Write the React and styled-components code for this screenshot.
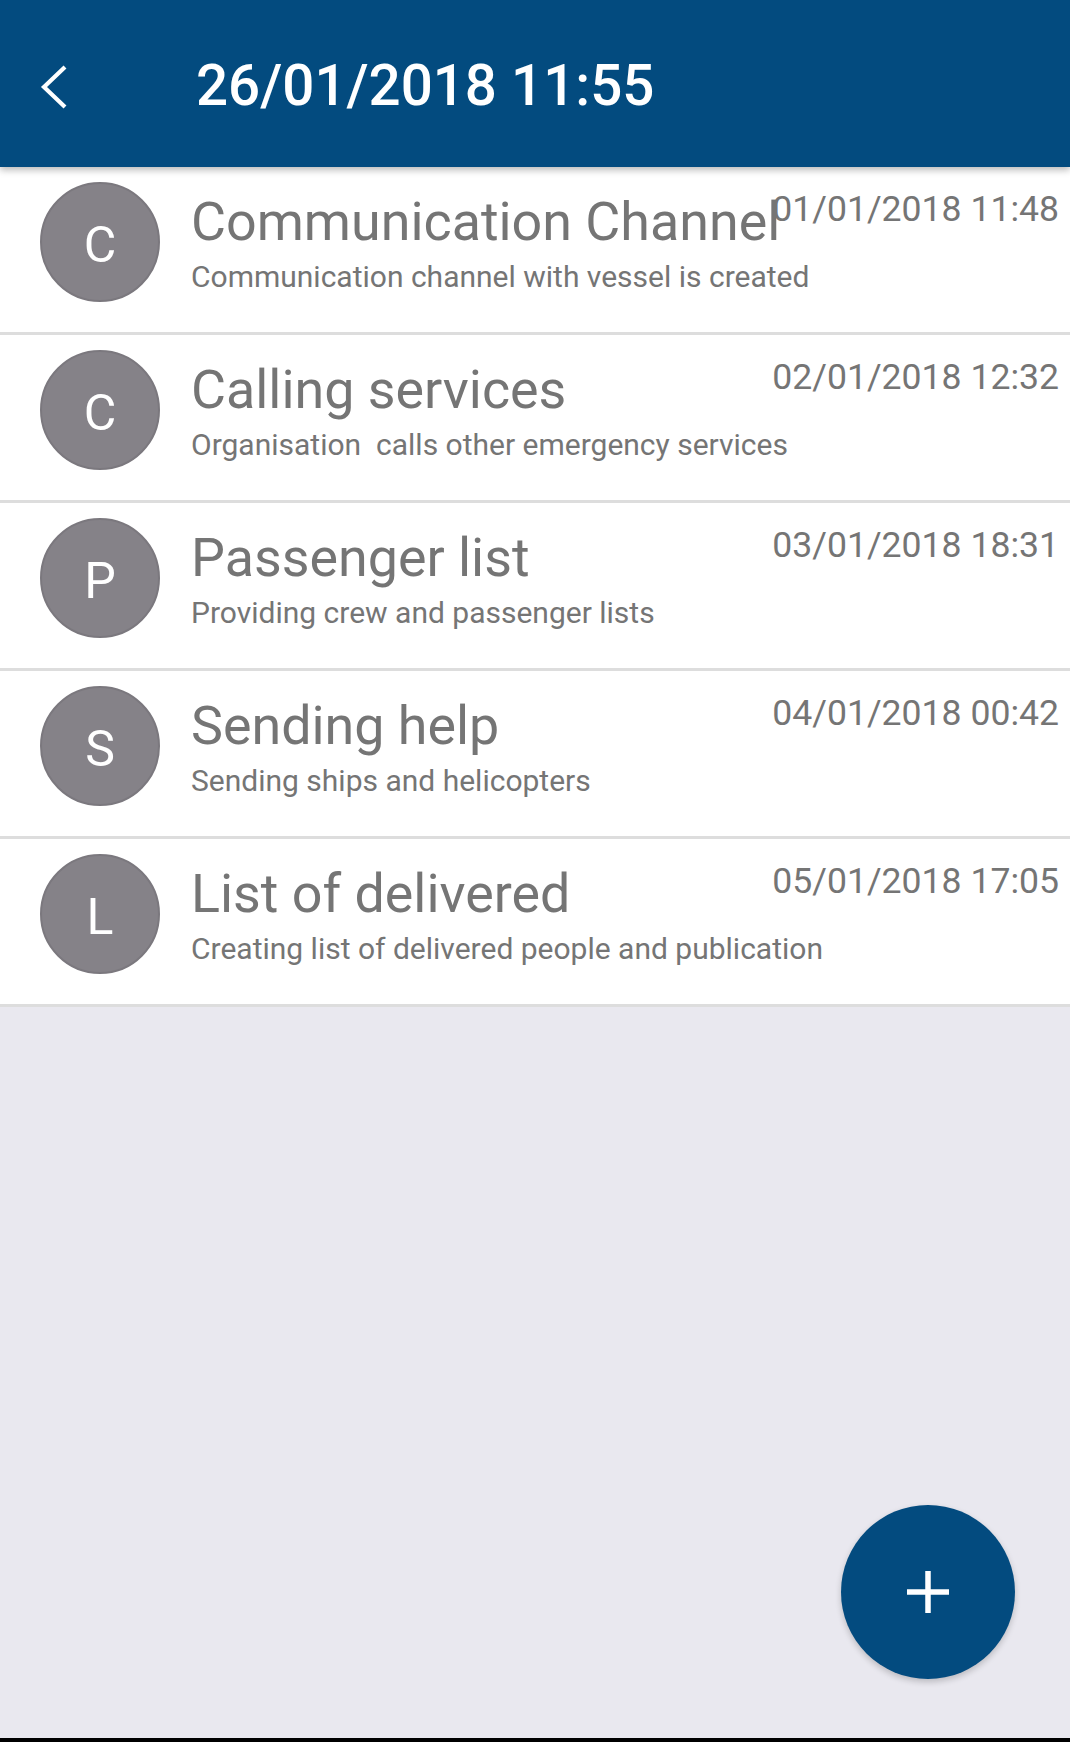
import styled, { createGlobalStyle } from "styled-components";

const GlobalStyle = createGlobalStyle`
  html, body {
    margin: 0;
    padding: 0;
    background: #e9e8ef;
  }
  * {
    box-sizing: border-box;
  }
`;

const Screen = styled.div`
  position: relative;
  min-height: 100vh;
  display: flex;
  flex-direction: column;
  background: #e9e8ef;
  border-bottom: 4px solid #000;
  font-family: Roboto, "Liberation Sans", sans-serif;
`;

const Header = styled.header`
  position: relative;
  z-index: 2;
  height: 167px;
  flex-shrink: 0;
  display: flex;
  align-items: center;
  padding: 6px 0 0 39px;
  background: #034b7f;
  box-shadow: 0 3px 7px rgba(0, 0, 0, 0.28);
`;

const BackButton = styled.button`
  display: flex;
  padding: 0;
  border: none;
  background: none;
  margin-right: 127px;
  cursor: pointer;
`;

const HeaderTitle = styled.h1`
  margin: 0;
  font-size: 56.5px;
  font-weight: 500;
  line-height: 1;
  color: #fff;
`;

const List = styled.ul`
  list-style: none;
  margin: 0;
  padding: 0;
`;

const Row = styled.li`
  position: relative;
  height: 168px;
  display: flex;
  align-items: flex-start;
  padding: 15px 0 0 40px;
  background: #fff;
  border-bottom: 3px solid #dddddd;
`;

const Avatar = styled.div`
  width: 120px;
  height: 120px;
  flex-shrink: 0;
  display: flex;
  align-items: center;
  justify-content: center;
  padding-top: 5px;
  border-radius: 50%;
  background: #858288;
  border: 2px solid #7b787e;
  color: #fff;
  font-size: 50px;
  margin-right: 31px;
`;

const Body = styled.div`
  padding-top: 13px;
  display: flex;
  flex-direction: column;
  gap: 13px;
`;

const Title = styled.div`
  font-size: 53.8px;
  line-height: 1;
  color: #757575;
  white-space: nowrap;
`;

const Subtitle = styled.div`
  font-size: 30px;
  line-height: 1;
  color: #757575;
  white-space: pre;
`;

const Stamp = styled.span`
  position: absolute;
  top: 25px;
  right: 11px;
  font-size: 35.6px;
  line-height: 1;
  color: #757575;
`;

const Fab = styled.button`
  position: absolute;
  right: 55px;
  bottom: 59px;
  width: 174px;
  height: 174px;
  border-radius: 50%;
  border: none;
  padding: 0;
  display: flex;
  align-items: center;
  justify-content: center;
  background: #034b7f;
  box-shadow: 0 3px 6px rgba(0, 0, 0, 0.2);
  cursor: pointer;
`;

const events = [
  {
    letter: "C",
    title: "Communication Channel",
    text: "Communication channel with vessel is created",
    date: "01/01/2018 11:48",
  },
  {
    letter: "C",
    title: "Calling services",
    text: "Organisation  calls other emergency services",
    date: "02/01/2018 12:32",
  },
  {
    letter: "P",
    title: "Passenger list",
    text: "Providing crew and passenger lists",
    date: "03/01/2018 18:31",
  },
  {
    letter: "S",
    title: "Sending help",
    text: "Sending ships and helicopters",
    date: "04/01/2018 00:42",
  },
  {
    letter: "L",
    title: "List of delivered",
    text: "Creating list of delivered people and publication",
    date: "05/01/2018 17:05",
  },
];

export default function App() {
  return (
    <Screen>
      <GlobalStyle />
      <Header>
        <BackButton aria-label="Back">
          <svg width="30" height="46" viewBox="0 0 30 46">
            <polyline
              points="26,3 5,23 26,43"
              fill="none"
              stroke="#fff"
              strokeWidth="4.2"
            />
          </svg>
        </BackButton>
        <HeaderTitle>26/01/2018 11:55</HeaderTitle>
      </Header>
      <List>
        {events.map((e) => (
          <Row key={e.date}>
            <Avatar>{e.letter}</Avatar>
            <Body>
              <Title>{e.title}</Title>
              <Subtitle>{e.text}</Subtitle>
            </Body>
            <Stamp>{e.date}</Stamp>
          </Row>
        ))}
      </List>
      <Fab aria-label="Add">
        <svg width="42" height="42" viewBox="0 0 42 42">
          <path d="M21 0v42M0 21h42" stroke="#fff" strokeWidth="5.5" />
        </svg>
      </Fab>
    </Screen>
  );
}
